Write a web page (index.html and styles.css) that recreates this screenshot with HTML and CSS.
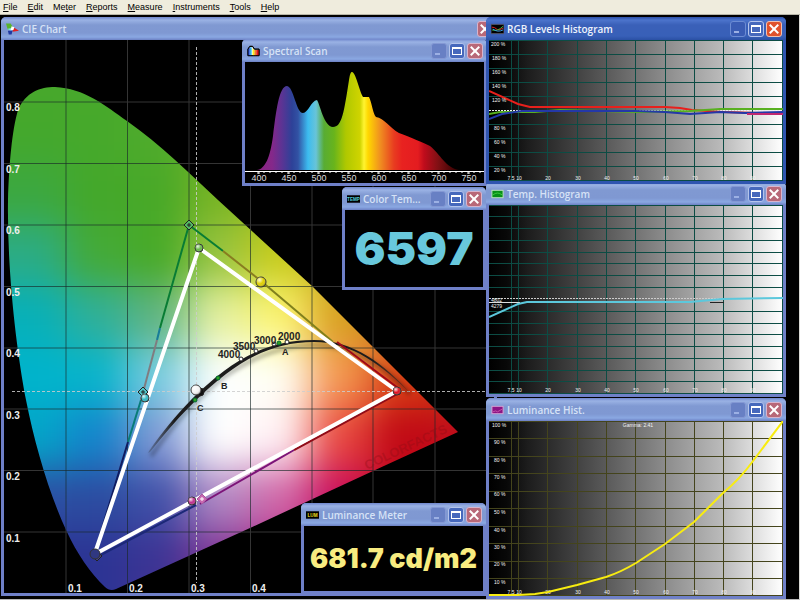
FILE: index.html
```html
<!DOCTYPE html>
<html lang="en">
<head>
<meta charset="utf-8">
<title>Color Analyzer</title>
<link rel="stylesheet" href="styles.css">
</head>
<body>
<svg class="defs" aria-hidden="true">
  <defs>
    <linearGradient id="ramp">
      <stop offset="0" stop-color="#000"/><stop offset=".06" stop-color="#080808"/><stop offset=".13" stop-color="#1c1c1c"/><stop offset=".22" stop-color="#303030"/><stop offset=".4" stop-color="#5a5a5a"/><stop offset=".6" stop-color="#8c8c8c"/><stop offset=".8" stop-color="#bcbcbc"/><stop offset="1" stop-color="#fff"/>
    </linearGradient>
    <linearGradient id="spectrum" gradientUnits="userSpaceOnUse" x1="258" x2="458" y1="0" y2="0">
      <stop offset="0" stop-color="#8a2480"/><stop offset=".07" stop-color="#85288a"/><stop offset=".12" stop-color="#5b3494"/><stop offset=".17" stop-color="#2d4198"/><stop offset=".2" stop-color="#3252a4"/><stop offset=".25" stop-color="#3cbcf0"/><stop offset=".29" stop-color="#68c4d8"/><stop offset=".33" stop-color="#58ac34"/><stop offset=".38" stop-color="#68b41c"/><stop offset=".44" stop-color="#b0c800"/><stop offset=".51" stop-color="#d0d400"/><stop offset=".53" stop-color="#fff430"/><stop offset=".55" stop-color="#ffd800"/><stop offset=".61" stop-color="#f09020"/><stop offset=".68" stop-color="#e83c20"/><stop offset=".72" stop-color="#e82220"/><stop offset=".8" stop-color="#e41c20"/><stop offset=".83" stop-color="#c00c1c"/><stop offset=".9" stop-color="#801014"/><stop offset="1" stop-color="#300"/>
    </linearGradient>
    <linearGradient id="arc" gradientUnits="userSpaceOnUse" x1="148" x2="412" y1="0" y2="0">
      <stop offset="0" stop-color="#222" stop-opacity=".2"/><stop offset=".1" stop-color="#1c1c1c"/><stop offset=".85" stop-color="#1c1c1c"/><stop offset="1" stop-color="#222" stop-opacity=".3"/>
    </linearGradient>
    <radialGradient id="ball" cx=".35" cy=".3" r=".8"><stop offset="0" stop-color="#fff" stop-opacity=".85"/><stop offset=".5" stop-color="#fff" stop-opacity="0"/><stop offset="1" stop-color="#000" stop-opacity=".5"/></radialGradient>
    <clipPath id="locus"><path d="M8 200C9 165 12 130 18 110C26 92 40 87 55 87C84 88 106 106 127 121C160 144 189 173 218 200L312 286L373 347L458 432L373 471L250 528L116 589C112 591 108 590 105 587C91 574 76 552 67 532C50 496 35 446 26 400C16 347 7 270 8 200Z"/></clipPath>
    <filter id="blend" filterUnits="userSpaceOnUse" x="-60" y="0" width="620" height="680" color-interpolation-filters="sRGB"><feGaussianBlur stdDeviation="19"/></filter>
    <filter id="soft" x="-20%" y="-20%" width="140%" height="140%"><feGaussianBlur stdDeviation="2"/></filter>
  </defs>
</svg>

<nav class="menu" aria-label="Main menu">
  <button><u>F</u>ile</button><button><u>E</u>dit</button><button>Me<u>t</u>er</button><button><u>R</u>eports</button><button><u>M</u>easure</button><button><u>I</u>nstruments</button><button><u>T</u>ools</button><button><u>H</u>elp</button>
</nav>

<main class="desktop">
  <section class="window win-cie">
    <header class="titlebar">
      <svg class="icon" viewBox="0 0 14 12"><path d="M0 0L5 0L8 5L2 7Z" fill="#58b42c"/><path d="M8 4L14 8L7 9Z" fill="#e02020"/><path d="M1 6L6 5L6 8Z" fill="#80e0f0"/><path d="M6 3L9 4L8 7L5 7Z" fill="#fff"/><path d="M2 8L7 8L6 12L3 12Z" fill="#2038a0"/></svg>
      <h2>CIE Chart</h2>
      <span class="controls"><button class="close" aria-label="Close"></button></span>
    </header>
    <svg class="view" viewBox="4 40 490 553" role="img" aria-label="CIE chromaticity chart">
      <rect x="4" y="40" width="490" height="553" fill="#000"/>
      <path class="grid-dark" d="M66 40V593M127.500 40V593M189 40V593M250.500 40V593M312 40V593M373 40V593M435 40V593M4 102H494M4 163.500H494M4 225H494M4 286.500H494M4 348H494M4 409H494M4 470.500H494M4 532H494"/>
      <g clip-path="url(#locus)">
        <g id="gamut" filter="url(#blend)"></g>
        <path class="grid-light" d="M66 40V593M127.500 40V593M189 40V593M250.500 40V593M312 40V593M373 40V593M435 40V593M4 102H494M4 163.500H494M4 225H494M4 286.500H494M4 348H494M4 409H494M4 470.500H494M4 532H494"/>
        <text class="emboss" transform="translate(367 470) rotate(-25)">COLORFACTS</text>
      </g>
      <path class="cross" d="M196.500 47V583M12 391.500H494"/>
      <path d="M151 456C178 417 200 396 222 378C250 358 282 345 316 345C352 345 385 366 410 394" fill="none" stroke="#000" stroke-opacity=".3" stroke-width="4" filter="url(#soft)"/>
      <path d="M148 453L149 451C175 414 200 389 224 371C250 351 280 340 314 340C352 340 385 364 411 394C383 366 352 342 314 342C280 342 252 354 226 374C202 392 176 419 150 452Z" fill="url(#arc)"/>
      <g fill="none" stroke-width="2">
        <path d="M189 225L160 328" stroke="#087c34"/><path d="M160 328L157 340" stroke="#187c98"/><path d="M157 340L141 400" stroke="#807c80"/><path d="M141 400L128 442" stroke="#087c78"/><path d="M128 442L95 552" stroke="#101c60"/>
        <path d="M189 225L223 251" stroke="#087c34"/><path d="M223 251L261 281" stroke="#887c20"/><path d="M261 281L333 342" stroke="#80801c"/><path d="M337 342L398 388" stroke="#a00818"/>
        <path d="M97 557L196 505" stroke="#1c2878"/><path d="M200 504L294 450" stroke="#7c1478"/><path d="M294 450L397 394" stroke="#900c18"/>
      </g>
      <path d="M96 550L199 248L397 391L97 553" fill="none" stroke="#fff" stroke-width="4" stroke-linejoin="round"/>
      <g stroke="#222" stroke-width="1">
        <path d="M189 220L194 225L189 230L184 225Z" fill="#54b864"/><path d="M187 225H191M189 223V227"/>
        <path d="M143 387L148 392L143 397L138 392Z" fill="#50c4c8"/><path d="M141 392H145M143 390V394"/>
        <path d="M97 551L102 556L97 561L92 556Z" fill="#444484"/>
        <path d="M202 494L207 499L202 504L197 499Z" fill="#c868b0" stroke="#a858a0"/><path d="M200 499H204M202 497V501" stroke="#fff"/>
        <circle cx="200" cy="392" r="4" fill="#111"/>
      </g>
      <g class="balls">
        <circle cx="199" cy="248" r="4" fill="#68b848"/><circle cx="261" cy="282" r="5" fill="#e0d000"/><circle cx="145" cy="398" r="4" fill="#30b8c4"/><circle cx="196" cy="390" r="5" fill="#f4f4f4"/><circle cx="397" cy="391" r="4" fill="#e01020"/><circle cx="192" cy="501" r="4" fill="#c03090"/><circle cx="95" cy="554" r="5" fill="#303880"/>
      </g>
      <g class="shine"><circle cx="199" cy="248" r="4"/><circle cx="261" cy="282" r="5"/><circle cx="145" cy="398" r="4"/><circle cx="196" cy="390" r="5"/><circle cx="397" cy="391" r="4"/><circle cx="192" cy="501" r="4"/></g>
      <g fill="#30a020" stroke="#063" stroke-width="1"><circle cx="195" cy="400" r="2"/><circle cx="218" cy="378" r="2"/><circle cx="279" cy="343" r="2"/></g>
      <g fill="#fff" stroke="#222" stroke-width="1"><circle cx="241" cy="359" r="2"/><circle cx="256" cy="351" r="2"/><circle cx="274" cy="344" r="2"/><circle cx="287" cy="342" r="2"/></g>
      <g class="kelvin"><text x="218" y="358">4000</text><text x="233" y="350">3500</text><text x="254" y="344">3000</text><text x="278" y="340">2000</text></g>
      <g class="illuminant"><text x="282" y="355">A</text><text x="221" y="389">B</text><text x="197" y="411">C</text></g>
      <g class="axis"><text x="6" y="111">0.8</text><text x="6" y="173">0.7</text><text x="6" y="234">0.6</text><text x="6" y="296">0.5</text><text x="6" y="357">0.4</text><text x="6" y="419">0.3</text><text x="6" y="480">0.2</text><text x="6" y="542">0.1</text><text x="68" y="592">0.1</text><text x="129" y="592">0.2</text><text x="191" y="592">0.3</text><text x="252" y="592">0.4</text></g>
    </svg>
  </section>

  <section class="window win-spectral">
    <header class="titlebar">
      <svg class="icon" viewBox="0 0 14 12"><path d="M1 11V4L3 1H6L8 4L13 4V11Z" fill="#fff" stroke="#000"/><path d="M1 4L3 2V11H1Z" fill="#2040d0"/><path d="M3 2H5V11H3Z" fill="#30b0e8"/><path d="M6 3L8 5V11H6Z" fill="#f8f020"/><path d="M8 5H10V11H8Z" fill="#f08020"/><path d="M10 5H13V11H10Z" fill="#e01818"/><path d="M1 11V4L3 1H6L8 4L13 4V11Z" fill="none" stroke="#000"/></svg>
      <h2>Spectral Scan</h2>
      <span class="controls"><button class="min" aria-label="Minimize"></button><button class="max" aria-label="Maximize"></button><button class="close" aria-label="Close"></button></span>
    </header>
    <svg class="view" viewBox="245 62 239 121" role="img" aria-label="Spectral power distribution">
      <rect x="245" y="62" width="239" height="121" fill="#000"/>
      <path d="M257 170C265 169 270 158 273 136C276 112 279 86 287 86C294 87 296 113 303 113C308 113 311 101 317 100C320 104 324 127 333 127C342 127 344 112 349 80C350 73 351 72 352 72C356 73 359 90 363 97L369 97C372 103 373 114 376 117C384 118 390 128 399 133C412 138 422 142 430 146C440 154 446 168 459 170Z" fill="url(#spectrum)"/>
      <path d="M245 171.500H484" stroke="#fff"/>
      <path id="ticks" d="" stroke="#fff"/>
      <g class="nm"><text x="259" y="181">400</text><text x="289" y="181">450</text><text x="319" y="181">500</text><text x="349" y="181">550</text><text x="379" y="181">600</text><text x="409" y="181">650</text><text x="439" y="181">700</text><text x="469" y="181">750</text></g>
    </svg>
  </section>

  <section class="window win-temp-meter">
    <header class="titlebar">
      <svg class="icon" viewBox="0 0 14 12"><rect y="2" width="14" height="8" fill="#000"/><text class="tag" x="7" y="8" fill="#50c8d8">TEMP</text></svg>
      <h2>Color Tem...</h2>
      <span class="controls"><button class="min" aria-label="Minimize"></button><button class="max" aria-label="Maximize"></button><button class="close" aria-label="Close"></button></span>
    </header>
    <output class="readout readout-temp">6597</output>
  </section>

  <section class="window win-lum-meter">
    <header class="titlebar">
      <svg class="icon" viewBox="0 0 14 12"><rect y="2" width="14" height="8" fill="#000"/><text class="tag" x="7" y="8" fill="#f0e020">LUM</text></svg>
      <h2>Luminance Meter</h2>
      <span class="controls"><button class="min" aria-label="Minimize"></button><button class="max" aria-label="Maximize"></button><button class="close" aria-label="Close"></button></span>
    </header>
    <output class="readout readout-lum">681.7 cd/m2</output>
  </section>

  <section class="window win-temp-hist">
    <header class="titlebar">
      <svg class="icon" viewBox="0 0 14 12"><rect x="1" y="2" width="12" height="8" fill="#089018" stroke="#c0e8c0"/><path d="M2 7Q7 3 12 7" fill="none" stroke="#40d040"/></svg>
      <h2>Temp. Histogram</h2>
      <span class="controls"><button class="min" aria-label="Minimize"></button><button class="max" aria-label="Maximize"></button><button class="close" aria-label="Close"></button></span>
    </header>
    <svg class="view" viewBox="489 205 294 189" role="img" aria-label="Color temperature histogram">
      <rect x="489" y="205" width="294" height="189" fill="url(#ramp)"/>
      <path class="grid-teal" d="M511.500 205V394M518.500 205V394M547.500 205V394M577.500 205V394M606.500 205V394M635.500 205V394M665.500 205V394M694.500 205V394M723.500 205V394M752.500 205V394M782.500 205V394M489 205.500H783M489 216.500H783M489 228.500H783M489 240.500H783M489 252.500H783M489 263.500H783M489 275.500H783M489 287.500H783M489 311.500H783M489 323.500H783M489 334.500H783M489 346.500H783M489 358.500H783M489 370.500H783M489 381.500H783M489 393.500H783"/>
      <path d="M489 298.500H783" stroke="#ccc" stroke-dasharray="2 1"/>
      <path d="M489 302.500H520" stroke="#ddd"/><path d="M710 302.500H724" stroke="#222"/>
      <path d="M489 317L518 304L527 302H690L722 299L783 298" fill="none" stroke="#5cc8dc" stroke-width="2"/>
      <g class="pixel"><text x="491" y="302">4802</text><text x="491" y="308">4279</text></g>
      <g class="pixel mid"><text x="511" y="392">7.5</text><text x="519" y="392">10</text><text x="548" y="392">20</text><text x="578" y="392">30</text><text x="607" y="392">40</text><text x="636" y="392">50</text><text x="666" y="392">60</text><text x="695" y="392">70</text><text x="724" y="392">80</text><text x="753" y="392">90</text></g>
    </svg>
  </section>

  <section class="window active win-rgb">
    <header class="titlebar">
      <svg class="icon" viewBox="0 0 14 12"><rect y="1" width="14" height="10" fill="#000" stroke="#556"/><path d="M1 4Q4 4 6 6T13 5" fill="none" stroke="#f02020"/><path d="M1 7Q7 9 13 3" fill="none" stroke="#40b840"/><path d="M2 6Q7 10 13 7" fill="none" stroke="#40a8f0"/></svg>
      <h2>RGB Levels Histogram</h2>
      <span class="controls"><button class="min" aria-label="Minimize"></button><button class="max" aria-label="Maximize"></button><button class="close" aria-label="Close"></button></span>
    </header>
    <svg class="view" viewBox="489 40 294 141" role="img" aria-label="RGB levels histogram">
      <rect x="489" y="40" width="294" height="141" fill="url(#ramp)"/>
      <path class="grid-teal" d="M511.500 40V181M518.500 40V181M547.500 40V181M577.500 40V181M606.500 40V181M635.500 40V181M665.500 40V181M694.500 40V181M723.500 40V181M752.500 40V181M782.500 40V181M489 40.500H783M489 54.500H783M489 68.500H783M489 82.500H783M489 96.500H783M489 124.500H783M489 138.500H783M489 152.500H783M489 166.500H783M489 180.500H783"/>
      <path d="M489 110.500H783" stroke="#eee" stroke-dasharray="2 1"/>
      <g fill="none" stroke-width="2">
        <path d="M489 91L518 104L530 107L665 107L680 108L692 110L723 112L783 114" stroke="#e8201c"/>
        <path d="M489 114L500 112L535 112L560 110L640 112L690 111L720 109L783 109" stroke="#58b020"/>
        <path d="M489 119L502 114L522 111L600 111L635 111L665 112L690 114L720 112L745 113L783 112" stroke="#2438a8"/>
        <path d="M747 114H783" stroke="#c02870"/>
      </g>
      <g class="pixel"><text x="491" y="46">200 %</text><text x="492" y="60">180 %</text><text x="492" y="74">160 %</text><text x="492" y="88">140 %</text><text x="492" y="102">120 %</text><text x="494" y="130">80 %</text><text x="494" y="144">60 %</text><text x="494" y="158">40 %</text><text x="494" y="172">20 %</text></g>
      <g class="pixel mid"><text x="511" y="180">7.5</text><text x="519" y="180">10</text><text x="548" y="180">20</text><text x="578" y="180">30</text><text x="607" y="180">40</text><text x="636" y="180">50</text><text x="666" y="180">60</text><text x="695" y="180">70</text><text x="724" y="180">80</text><text x="753" y="180">90</text></g>
    </svg>
  </section>

  <section class="window win-lum-hist">
    <header class="titlebar">
      <svg class="icon" viewBox="0 0 14 12"><rect x="1" y="2" width="12" height="8" fill="#8c1484" stroke="#d8a8d8"/><path d="M2 8L5 7L7 8L12 5" fill="none" stroke="#c858a8"/></svg>
      <h2>Luminance Hist.</h2>
      <span class="controls"><button class="min" aria-label="Minimize"></button><button class="max" aria-label="Maximize"></button><button class="close" aria-label="Close"></button></span>
    </header>
    <svg class="view" viewBox="489 421 294 175" role="img" aria-label="Luminance histogram">
      <rect x="489" y="421" width="294" height="175" fill="url(#ramp)"/>
      <path class="grid-olive" d="M511.500 421V596M518.500 421V596M547.500 421V596M577.500 421V596M606.500 421V596M635.500 421V596M665.500 421V596M694.500 421V596M723.500 421V596M752.500 421V596M782.500 421V596M489 421.500H783M489 438.500H783M489 456.500H783M489 473.500H783M489 491.500H783M489 508.500H783M489 526.500H783M489 543.500H783M489 561.500H783M489 578.500H783M489 595.500H783"/>
      <g class="pixel"><text x="492" y="427">100 %</text><text x="494" y="444">90 %</text><text x="494" y="462">80 %</text><text x="494" y="479">70 %</text><text x="494" y="496">60 %</text><text x="494" y="514">50 %</text><text x="494" y="532">40 %</text><text x="494" y="549">30 %</text><text x="494" y="566">20 %</text><text x="494" y="584">10 %</text></g>
      <g class="pixel mid"><text x="638" y="427">Gamma: 2.41</text><text x="511" y="594">7.5</text><text x="519" y="594">10</text><text x="548" y="594">20</text><text x="578" y="594">30</text><text x="607" y="594">40</text><text x="636" y="594">50</text><text x="666" y="594">60</text><text x="695" y="594">70</text><text x="724" y="594">80</text><text x="753" y="594">90</text></g>
      <path d="M489 595H518L535 594L548 592L577 585L606 577Q621 572 636 563L665 544L694 522L723 493Q740 479 753 461L783 421" fill="none" stroke="#f8ec10" stroke-width="2"/>
    </svg>
  </section>
</main>
<script src="charts.js"></script>
</body>
</html>
```
FILE: styles.css
```css
* { box-sizing: border-box; }

body {
  margin: 0;
  min-height: 100vh;
  display: flex;
  flex-direction: column;
  background: #000;
  font-family: "Open Sans", "Noto Sans", sans-serif;
  overflow: hidden;
}

.defs { position: absolute; width: 0; height: 0; }

button { margin: 0; padding: 0; border: 0; background: none; font: inherit; color: inherit; }

.menu {
  display: flex;
  gap: 10px;
  height: 15px;
  padding: 0 3px;
  background: #efecdd;
  border-bottom: 1px solid #b8b6a8;
  font: 9px/13px "Liberation Sans", Arial, sans-serif;
  color: #000;
}

.desktop {
  position: relative;
  flex: 1;
  background: #000;
  border-right: 1px solid #d8d8d4;
  border-bottom: 1px solid #b8b8b8;
}

.window {
  position: absolute;
  display: flex;
  flex-direction: column;
  padding: 0 3px 3px;
  background: #6f80c8;
  border-radius: 5px 5px 0 0;
  overflow: hidden;
}

.titlebar {
  flex: none;
  display: flex;
  align-items: center;
  gap: 3px;
  height: 23px;
  margin: 0 -3px;
  padding: 1px 4px 0 5px;
  background: linear-gradient(#6f86cc 0, #9ab2e4 3px, #8099d2 8px, #7f98d2 16px, #8aa8e2 20px, #6c80c4 23px);
  color: #d6e2f6;
}

.titlebar h2 {
  flex: 1;
  min-width: 0;
  margin: 0;
  font-size: 10px;
  line-height: 16px;
  font-weight: 600;
  white-space: nowrap;
}

.icon { flex: none; width: 13px; height: 12px; }
.tag { font: bold 5px "Liberation Sans", sans-serif; text-anchor: middle; }

.active { background: #2f55b0; }
.active .titlebar {
  background: linear-gradient(#2c50a8 0, #4c74cc 3px, #3a60b8 8px, #3860b8 19px, #2a50a4 23px);
  color: #eef3fc;
}

.controls { display: flex; gap: 2px; }
.controls button {
  position: relative;
  width: 16px;
  height: 16px;
  border: 1px solid #b4c4ec;
  border-radius: 3px;
  background: #4668bc;
}
.controls .min { background: #6880c4; border-color: #8498d4; }
.controls .close { background: #b86878; border-color: #d8b4cc; }
.active .controls .min { background: #3a5cb4; border-color: #6c8cd4; }
.active .controls .close { background: #e0522c; border-color: #f0c0b0; }
.controls .min::after { content: ""; position: absolute; left: 3px; bottom: 3px; width: 5px; height: 2px; background: #9cb0e4; }
.controls .max::after { content: ""; position: absolute; inset: 3px 2px; border: 1px solid #fff; border-top-width: 2px; }
.controls .close::before,
.controls .close::after { content: ""; position: absolute; left: 1px; top: 6px; width: 12px; height: 2px; background: #fff; transform: rotate(45deg); }
.controls .close::after { transform: rotate(-45deg); }

.win-cie { left: 1px; top: 2px; width: 496px; }
.win-spectral { left: 242px; top: 24px; width: 245px; }
.win-temp-meter { left: 342px; top: 172px; width: 144px; }
.win-lum-meter { left: 301px; top: 488px; width: 185px; }
.win-rgb { left: 486px; top: 2px; width: 300px; }
.win-temp-hist { left: 486px; top: 167px; width: 300px; }
.win-lum-hist { left: 486px; top: 383px; width: 300px; }

.view { display: block; width: 100%; height: auto; }

.readout {
  display: block;
  background: #000;
  text-align: center;
  white-space: nowrap;
  font-family: Inter, "Open Sans", sans-serif;
  font-weight: 900;
}
.readout-temp { color: #68c8dc; font-size: 46px; line-height: 77px; }
.readout-lum { color: #f8ec80; font-size: 27px; line-height: 65px; }

.grid-dark, .grid-light { fill: none; stroke: #343434; }
.grid-light { stroke: #182828; stroke-opacity: .65; }
.grid-teal { fill: none; stroke: #0c4c44; }
.grid-olive { fill: none; stroke: #44441c; }
.cross { fill: none; stroke: #ccc; stroke-dasharray: 3 2; stroke-opacity: .85; }
.balls circle { stroke: #333; stroke-width: 1; }
.shine { fill: url(#ball); }

.axis { font: bold 10px "Liberation Sans", sans-serif; fill: #eee; }
.kelvin { font: bold 10px "Liberation Sans", sans-serif; fill: #222; }
.illuminant { font: bold 9px "Liberation Sans", sans-serif; fill: #222; }
.nm { font: 9px "Liberation Sans", sans-serif; fill: #ddd; text-anchor: middle; }
.pixel { font: 5px "Liberation Sans", sans-serif; fill: #f4f4f4; }
.mid { text-anchor: middle; }
.emboss { font: bold 13px "Liberation Sans", sans-serif; fill: #8c0c14; fill-opacity: .35; }
```
FILE: charts.js
```js
const NS = "http://www.w3.org/2000/svg";

// Chromaticity colours, one row per 0.1 of y, one column per 0.1 of x.
const mesh = [
  "48a82c 48a82c 4caa2c 58ac2c 80b828 90b828 a0b820 a0b820",
  "48a82c 48a82c 4caa2c 58ac2c 80b828 90b828 a0b820 a0b820",
  "44a82c 46a92b 50ab2c 68b028 80b828 a0bc20 a0b820 a0b820",
  "3ca840 44a82a 48a928 78b424 98c01c b0c020 c0b828 c0b020",
  "2cac84 44aa38 48aa28 98c440 c8cc1c c4b428 c0a020 c08020",
  "08b0b8 30b098 60b480 e4f0a0 fcf470 d8a020 c88820 c07020",
  "00b4cc 08b4cc 78cce0 fcffff fffff4 f49850 d84014 c83010",
  "04a4c8 1484cc 8098d4 ffffff fff0f4 e84840 c00814 c00c1c",
  "2c50a4 2c4ca0 4050a8 b088c4 d068a8 c80c5c c40820 c00c1c",
  "2c3494 2c3494 3c3494 803494 b02488 c01c80 c01050 c00c1c",
  "2c3494 2c3494 403494 803494 b02888 c02080 c01050 c00c1c"
];
const gamut = document.getElementById("gamut");
mesh.forEach((row, j) => row.split(" ").forEach((hex, i) => {
  const r = document.createElementNS(NS, "rect");
  const left = i === 0 ? -60 : 5 + i * 61;
  const top = -20 + j * 61;
  r.setAttribute("x", left);
  r.setAttribute("y", top);
  r.setAttribute("width", 67 + i * 61 - left);
  r.setAttribute("height", 62);
  r.setAttribute("fill", "#" + hex);
  gamut.append(r);
}));

// Wavelength scale: a short tick every 10 nm, a longer one every 50 nm.
let d = "";
for (let nm = 400; nm <= 770; nm += 10) {
  const x = 258 + (nm - 400) * 0.6;
  d += nm % 50 === 0 ? `M${x} 172v2m1 0v-2` : `M${x} 172v1`;
}
document.getElementById("ticks").setAttribute("d", d);
```
